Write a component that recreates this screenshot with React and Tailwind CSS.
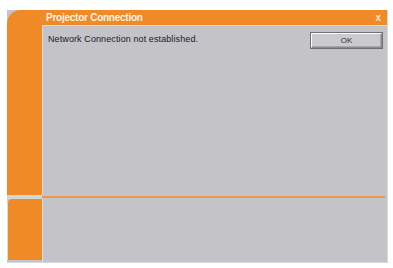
const App = () => {
  return (
    <div className="w-[393px] h-[268px] bg-white pt-[10px] pl-[7px] pr-[5px] font-['Liberation_Sans',sans-serif]">
      <div className="flex flex-col w-[381px] h-[253px] bg-[#c4c3c8] border-r border-b border-[#d6d8dc]">
        {/* upper part */}
        <div className="flex h-[185px]">
          <div className="w-[35px] bg-[#f08a26] rounded-tl-[14px]" />
          <div className="flex-1 flex flex-col">
            <div className="h-[15px] bg-[#f08a26] flex items-center justify-between pl-[4px] pr-[6px]">
              <span className="text-[10px] font-bold text-[#fff4e8] leading-none tracking-tight">Projector Connection</span>
              <span className="text-[10px] font-bold text-[#fde3c8] leading-none">x</span>
            </div>
            <div className="flex-1 flex items-start justify-between pl-[5px] pr-[5px] pt-[8px] border-l border-t border-[#d9dde0]">
              <span className="text-[9px] text-[#202020] leading-none mt-[1px] tracking-[0.1px]">Network Connection not established.</span>
              <button
                type="button"
                className="w-[71px] h-[15px] mt-[-1px] bg-[#cbcacf] border border-t-white border-l-white border-r-[#8a8a8e] border-b-[#8a8a8e] shadow-[inset_-1px_-1px_0_#a8a8ac,0_0_0_1px_#707074] text-[8px] text-[#303030] leading-none flex items-center justify-center"
              >
                OK
              </button>
            </div>
          </div>
        </div>
        {/* separator */}
        <div className="flex h-[4px]">
          <div className="w-[35px] bg-[#d2d6d9]" />
          <div className="flex-1 flex flex-col justify-center pr-[2px]">
            <div className="h-[2px] bg-[#e89a55]" />
          </div>
        </div>
        {/* lower part */}
        <div className="flex flex-1">
          <div className="w-[35px] bg-[#f08a26] rounded-tl-[4px] mb-[2px] border-l border-[#d9dde0]" />
          <div className="flex-1 border-l border-[#d9dde0]" />
        </div>
      </div>
    </div>
  );
};

export default App;
